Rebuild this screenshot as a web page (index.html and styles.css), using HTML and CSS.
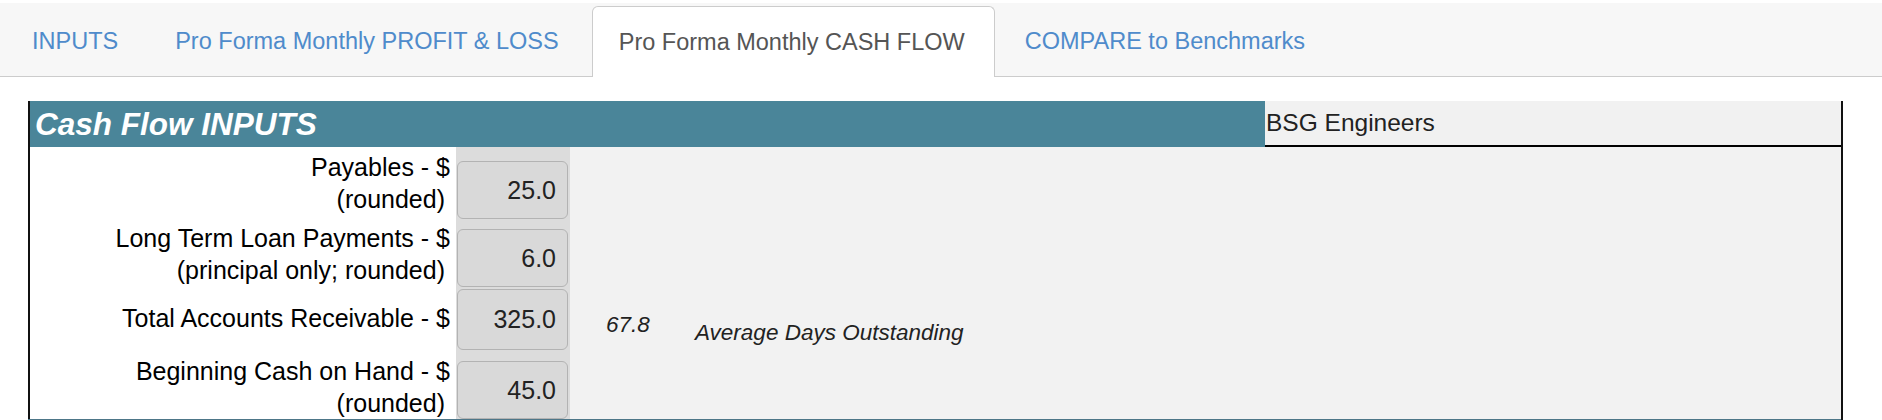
FILE: index.html
```html
<!DOCTYPE html>
<html lang="en">
<head>
<meta charset="utf-8">
<title>Pro Forma Monthly CASH FLOW</title>
<link rel="stylesheet" href="styles.css">
</head>
<body>
<nav class="tabs">
  <a class="tab tab-first">INPUTS</a>
  <a class="tab">Pro Forma Monthly PROFIT &amp; LOSS</a>
  <a class="tab active">Pro Forma Monthly CASH FLOW</a>
  <a class="tab">COMPARE to Benchmarks</a>
</nav>
<section class="panel">
  <div class="panel-head">
    <div class="title">Cash Flow INPUTS</div>
    <div class="company">BSG Engineers</div>
  </div>
  <div class="panel-body">
    <div class="label">Payables - $<br><span class="sub">(rounded)</span></div>
    <div class="field field-low"><div class="input">25.0</div></div>
    <div class="extra"></div>

    <div class="label">Long Term Loan Payments - $<br><span class="sub">(principal only; rounded)</span></div>
    <div class="field"><div class="input">6.0</div></div>
    <div class="extra"></div>

    <div class="label">Total Accounts Receivable - $</div>
    <div class="field field-high"><div class="input input-tall">325.0</div></div>
    <div class="extra"><span class="calc">67.8</span><span class="note">Average Days Outstanding</span></div>

    <div class="label label-low">Beginning Cash on Hand - $<br><span class="sub">(rounded)</span></div>
    <div class="field field-low"><div class="input">45.0</div></div>
    <div class="extra"></div>
  </div>
  <div class="next-head"></div>
</section>
</body>
</html>
```
FILE: styles.css
```css
html, body {
  margin: 0;
  padding: 0;
  background: #ffffff;
  font-family: "Liberation Sans", Arial, Helvetica, sans-serif;
  overflow: hidden;
}

.tabs {
  margin-top: 3px;
  height: 70px;
  padding: 3px 0 0 1px;
  background: #f7f7f7;
  border-bottom: 1px solid #cccccc;
  display: flex;
  align-items: stretch;
}

.tab {
  display: flex;
  align-items: center;
  padding: 0 26px;
  margin-right: 6px;
  font-size: 23.5px;
  color: #4f8bcb;
  border: 1px solid transparent;
  border-bottom: none;
  border-radius: 6px 6px 0 0;
}

.tab-first {
  padding-left: 30px;
  padding-right: 23px;
}

.tab.active {
  background: #ffffff;
  color: #555555;
  border-color: #cccccc;
  margin-bottom: -1px;
  padding-right: 29px;
  margin-right: 3px;
}

.panel {
  margin: 24px 0 0 28px;
  width: 1815px;
  border-left: 2px solid #111111;
  border-right: 2px solid #111111;
  box-sizing: border-box;
}

.panel-head {
  display: flex;
  height: 46px;
}

.title {
  width: 1235px;
  background: #4a8599;
  color: #ffffff;
  font-weight: bold;
  font-style: italic;
  font-size: 31.5px;
  padding-left: 5px;
  box-sizing: border-box;
  display: flex;
  align-items: center;
}

.company {
  flex: 1;
  background: #f1f1f1;
  border-bottom: 2px solid #000000;
  font-size: 24.5px;
  color: #222222;
  padding-left: 1px;
  display: flex;
  align-items: center;
}

.panel-body {
  display: grid;
  grid-template-columns: 426px 114px 1fr;
  grid-template-rows: 80px 62px 66px 64px;
  background: #f2f2f2;
}

.label {
  background: #ffffff;
  text-align: right;
  font-size: 25px;
  line-height: 32px;
  color: #000000;
  padding: 0 6px 8px 0;
  display: flex;
  flex-direction: column;
  justify-content: center;
  align-items: flex-end;
}

.label-low {
  padding-bottom: 0;
}

.sub {
  padding-right: 5px;
}

.field {
  background: #dcdcdc;
  display: flex;
  align-items: center;
  padding-left: 1px;
}

.field-low {
  padding-top: 6px;
}

.field-high {
  align-items: flex-start;
}

.input {
  width: 111px;
  height: 58px;
  box-sizing: border-box;
  background: #d9d9d9;
  border: 1.5px solid #b3b3b3;
  border-radius: 6px;
  font-size: 25px;
  color: #222222;
  display: flex;
  align-items: center;
  justify-content: flex-end;
  padding-right: 11px;
}

.input-tall {
  height: 61px;
}

.extra {
  display: flex;
  align-items: flex-start;
  padding: 20px 0 0 36px;
  font-style: italic;
  font-size: 22.5px;
  line-height: 32px;
  color: #222222;
}

.calc {
  width: 89px;
}

.note {
  margin-top: 8px;
}

.next-head {
  height: 3px;
  background: #4d7688;
  margin-left: -2px;
}
```
